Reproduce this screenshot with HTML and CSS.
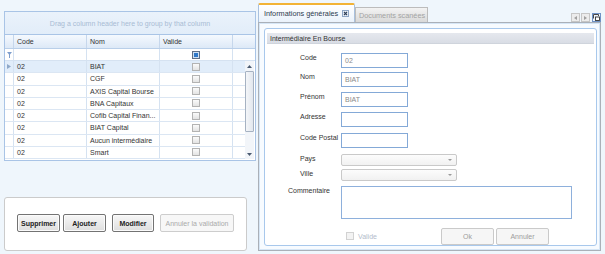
FILE: index.html
```html
<!DOCTYPE html>
<html lang="fr">
<head>
<meta charset="utf-8">
<title>Intermédiaire En Bourse</title>
<link rel="stylesheet" href="styles.css">
</head>
<body>
<div class="app">
  <div class="left">
    <div class="grid">
      <div class="group-panel">Drag a column header here to group by that column</div>
      <div class="row header">
        <div class="c ind"></div><div class="c">Code</div><div class="c">Nom</div><div class="c">Valide</div><div class="c fill"></div>
      </div>
      <div class="row filter">
        <div class="c ind"><svg width="5" height="6" viewBox="0 0 5 6"><path d="M0 0H5L3 2.5V6H2V2.5Z" fill="#7d9dcc"/></svg></div>
        <div class="c"></div><div class="c"></div><div class="c center"><span class="chk chk-ind"></span></div><div class="c fill"></div>
      </div>
      <div class="body">
        <div class="rows">
          <div class="row data sel"><div class="c ind"><svg width="4" height="5" viewBox="0 0 4 5"><path d="M0 0L4 2.5L0 5Z" fill="#8fa8c8"/></svg></div><div class="c">02</div><div class="c">BIAT</div><div class="c center"><span class="chk"></span></div><div class="c fill"></div></div>
          <div class="row data"><div class="c ind"></div><div class="c">02</div><div class="c">CGF</div><div class="c center"><span class="chk"></span></div><div class="c fill"></div></div>
          <div class="row data"><div class="c ind"></div><div class="c">02</div><div class="c">AXIS Capital Bourse</div><div class="c center"><span class="chk"></span></div><div class="c fill"></div></div>
          <div class="row data"><div class="c ind"></div><div class="c">02</div><div class="c">BNA Capitaux</div><div class="c center"><span class="chk"></span></div><div class="c fill"></div></div>
          <div class="row data"><div class="c ind"></div><div class="c">02</div><div class="c">Cofib Capital Finan...</div><div class="c center"><span class="chk"></span></div><div class="c fill"></div></div>
          <div class="row data"><div class="c ind"></div><div class="c">02</div><div class="c">BIAT Capital</div><div class="c center"><span class="chk"></span></div><div class="c fill"></div></div>
          <div class="row data"><div class="c ind"></div><div class="c">02</div><div class="c">Aucun intermédiaire</div><div class="c center"><span class="chk"></span></div><div class="c fill"></div></div>
          <div class="row data"><div class="c ind"></div><div class="c">02</div><div class="c">Smart</div><div class="c center"><span class="chk"></span></div><div class="c fill"></div></div>
        </div>
        <div class="vscroll">
          <div class="sb-btn"><svg width="5" height="3" viewBox="0 0 5 3"><path d="M0 3L2.5 0L5 3Z" fill="#4a5a70"/></svg></div>
          <div class="sb-thumb"></div>
          <div class="sb-track"></div>
          <div class="sb-btn"><svg width="5" height="3" viewBox="0 0 5 3"><path d="M0 0L2.5 3L5 0Z" fill="#4a5a70"/></svg></div>
        </div>
      </div>
    </div>
    <div class="actions">
      <button class="btn w43">Supprimer</button>
      <button class="btn w43 gap3">Ajouter</button>
      <button class="btn w42 gap6">Modifier</button>
      <button class="btn w74 gap6 disabled">Annuler la validation</button>
    </div>
  </div>

  <div class="right">
    <div class="tabstrip">
      <div class="tab active">
        <span>Informations générales</span>
        <span class="close"><svg width="7" height="7" viewBox="0 0 7 7"><rect x="0.5" y="0.5" width="6" height="6" fill="#e9f0f9" stroke="#8ea6c6"/><path d="M2 2L5 5M5 2L2 5" stroke="#2f3f58" stroke-width="1.1"/></svg></span>
      </div>
      <div class="tab inactive"><span>Documents scanées</span></div>
      <div class="nav">
        <span class="nb"><svg width="3" height="4" viewBox="0 0 3 4"><path d="M3 0L0 2L3 4Z" fill="#a0a0a0"/></svg></span>
        <span class="nb"><svg width="3" height="4" viewBox="0 0 3 4"><path d="M0 0L3 2L0 4Z" fill="#a0a0a0"/></svg></span>
        <span class="nb blue"><svg width="7" height="7" viewBox="0 0 7 7"><path d="M0.5 4.5V0.5H5.5V2" fill="none" stroke="#333" stroke-width="0.9"/><rect x="2.5" y="3" width="4" height="3.5" fill="#fff" stroke="#333" stroke-width="0.9"/></svg></span>
      </div>
    </div>
    <div class="tabpanel">
      <div class="inner">
        <div class="group-title">Intermédiaire En Bourse</div>
        <div class="form">
          <label class="lbl">Code</label><div class="field"><span class="input">02</span></div>
          <label class="lbl">Nom</label><div class="field"><span class="input">BIAT</span></div>
          <label class="lbl">Prénom</label><div class="field"><span class="input">BIAT</span></div>
          <label class="lbl">Adresse</label><div class="field"><span class="input"></span></div>
          <label class="lbl">Code Postal</label><div class="field"><span class="input"></span></div>
          <label class="lbl">Pays</label><div class="field"><span class="combo"><svg width="4" height="2" viewBox="0 0 4 2"><path d="M0 0H4L2 2Z" fill="#9a9a9a"/></svg></span></div>
          <label class="lbl">Ville</label><div class="field"><span class="combo"><svg width="4" height="2" viewBox="0 0 4 2"><path d="M0 0H4L2 2Z" fill="#9a9a9a"/></svg></span></div>
          <label class="lbl wide">Commentaire</label><div class="field"><span class="textarea"></span></div>
          <div></div>
          <div class="footer">
            <span class="vcheck"><span class="chk dis"></span>Valide</span>
            <button class="btn2">Ok</button>
            <button class="btn2">Annuler</button>
          </div>
        </div>
      </div>
    </div>
  </div>
</div>
</body>
</html>
```
FILE: styles.css
```css
* { box-sizing: border-box; }
html, body { margin: 0; padding: 0; }
body {
  width: 605px;
  height: 254px;
  overflow: hidden;
  background: #eff6fc;
  font-family: "Liberation Sans", Arial, sans-serif;
  font-size: 7px;
  color: #333;
}
.app { display: flex; align-items: flex-start; }

/* ---------- left ---------- */
.left { width: 256px; padding: 11px 0 0 4px; display: flex; flex-direction: column; }
.grid {
  width: 252px;
  height: 150px;
  border: 1px solid #a9c4e6;
  background: #fff;
  display: flex;
  flex-direction: column;
}
.group-panel {
  height: 23px;
  line-height: 23px;
  text-align: center;
  color: #a8bcd4;
  background: linear-gradient(#eaf2fb, #e2edf9);
  border-bottom: 1px solid #a9c4e6;
}
.row {
  display: grid;
  grid-template-columns: 9px 73px 73px 73px 1fr;
}
.c {
  border-right: 1px solid #d5e2f1;
  padding-left: 3px;
  white-space: nowrap;
  overflow: hidden;
  display: flex;
  align-items: center;
}
.c.ind { padding-left: 2px; border-right-color: #d5e2f1; }
.c.fill { border-right: 0; }
.c.center { justify-content: center; padding-left: 0; }
.header {
  height: 14px;
  background: linear-gradient(#f5f9fe, #dde9f7);
  border-bottom: 1px solid #b9cfe9;
}
.header .c { border-right-color: #c6d7ec; }
.filter {
  height: 12px;
  border-bottom: 1px solid #d5e2f1;
}
.body { display: flex; height: 98px; }
.rows { width: 240px; }
.data {
  height: 12.25px;
  border-bottom: 1px solid #dbe6f3;
}
.data.sel { background: #e1edfa; }
.chk {
  width: 8px;
  height: 8px;
  border: 1px solid #b3b3b3;
  background: linear-gradient(#fbfbfb, #e3e3e3);
  display: inline-block;
}
.chk-ind {
  border-color: #5f6f86;
  background: #2f78c8;
  box-shadow: inset 0 0 0 1px #cfe0f4;
}
.vscroll {
  width: 9px;
  display: flex;
  flex-direction: column;
  background: #f2f5f9;
}
.sb-btn { height: 10px; display: flex; align-items: center; justify-content: center; }
.sb-thumb {
  height: 61px;
  border: 1px solid #a6b2c2;
  border-radius: 1px;
  background: linear-gradient(90deg, #f4f6f9, #e2e7ee);
}
.sb-track { flex: 1; }

.actions {
  margin-top: 36px;
  width: 243px;
  height: 54px;
  border: 1px solid #cbcbcb;
  border-radius: 3px;
  background: #fff;
  padding: 16px 0 0 12px;
  display: flex;
  align-items: flex-start;
}
.btn {
  height: 18px;
  padding: 0;
  border: 1px solid #737373;
  border-radius: 2px;
  background: linear-gradient(#f7f7f7, #dedede);
  font-family: inherit;
  font-size: 7px;
  font-weight: bold;
  color: #222;
  box-shadow: inset 0 0 0 1px #fbfbfb;
}
.w43 { width: 43px; }
.w42 { width: 42px; }
.w74 { width: 74px; }
.gap3 { margin-left: 3px; }
.gap6 { margin-left: 6px; }
.btn.disabled {
  border-color: #cdcdcd;
  background: #f7f7f7;
  color: #aaa;
  font-weight: normal;
  box-shadow: none;
}

/* ---------- right ---------- */
.right { width: 343px; margin-left: 2px; display: flex; flex-direction: column; }
.tabstrip { height: 22px; display: flex; align-items: flex-end; }
.tab { display: flex; align-items: center; white-space: nowrap; }
.tab.active {
  width: 97px;
  height: 19px;
  padding-left: 5px;
  border: 1px solid #a9c1de;
  border-top: 2px solid #f2b336;
  border-bottom: 0;
  border-radius: 2px 2px 0 0;
  background: linear-gradient(#ffffff, #eaf2fb);
  color: #2c3a4e;
  font-size: 7.3px;
}
.close { margin-left: 4px; display: flex; }
.tab.inactive {
  width: 73px;
  height: 15px;
  padding-left: 3px;
  border: 1px solid #bcbcbc;
  border-bottom: 0;
  background: linear-gradient(#f3f3f3, #d9d9d9);
  color: #a3a3a3;
  font-size: 7.3px;
}
.nav { margin-left: auto; display: flex; gap: 1px; align-self: flex-end; }
.nb {
  width: 9px;
  height: 9px;
  border: 1px solid #c6c6c6;
  background: #ececec;
  display: flex;
  align-items: center;
  justify-content: center;
}
.nb.blue { border-color: #6f92c6; background: #eef4fb; margin-left: 1px; }

.tabpanel {
  height: 229px;
  border: 1px solid #aab0b8;
  background: #f7fbff;
  box-shadow: inset 0 0 0 1px #d6e6f6;
  padding: 5px 3px 4px 5px;
}
.inner {
  height: 100%;
  border: 1px solid #a8c8ec;
  border-radius: 3px;
  background: #fff;
  padding: 4px 2px 0 2px;
}
.group-title {
  height: 11px;
  line-height: 11px;
  padding-left: 3px;
  background: linear-gradient(#e5e8ee, #d9dde5);
  border-bottom: 1px solid #cfd4dc;
  color: #333;
}
.form {
  margin-top: 9px;
  display: grid;
  grid-template-columns: 74px 1fr;
  grid-template-rows: 19px 20px 20px 21px 21px 15px 17px 41px 18px;
}
.lbl { padding-left: 33px; line-height: 9px; color: #333; white-space: nowrap; }
.lbl.wide { padding-left: 21px; }
.field { display: flex; align-items: flex-start; }
.input {
  width: 67px;
  height: 15px;
  border: 1px solid #84a9d7;
  background: #fff;
  color: #8a8a8a;
  padding-left: 3px;
  line-height: 13px;
}
.combo {
  width: 116px;
  height: 12px;
  border: 1px solid #c9c9c9;
  border-radius: 2px;
  background: linear-gradient(#fcfcfc, #f1f1f1);
  display: flex;
  align-items: center;
  justify-content: flex-end;
  padding-right: 4px;
}
.textarea {
  width: 231px;
  height: 33px;
  border: 1px solid #8eb0dc;
  background: #fff;
}
.footer { display: flex; align-items: center; }
.vcheck { display: flex; align-items: center; width: 100px; padding-left: 5px; color: #b3bccb; }
.vcheck .chk { margin-right: 4px; }
.chk.dis { border-color: #d2d2d2; background: #f3f3f3; }
.btn2 {
  width: 53px;
  height: 17px;
  padding: 0;
  border: 1px solid #cacaca;
  border-radius: 2px;
  background: #f6f6f6;
  color: #9d9d9d;
  font-family: inherit;
  font-size: 7px;
}
.btn2 + .btn2 { margin-left: 2px; }
```
